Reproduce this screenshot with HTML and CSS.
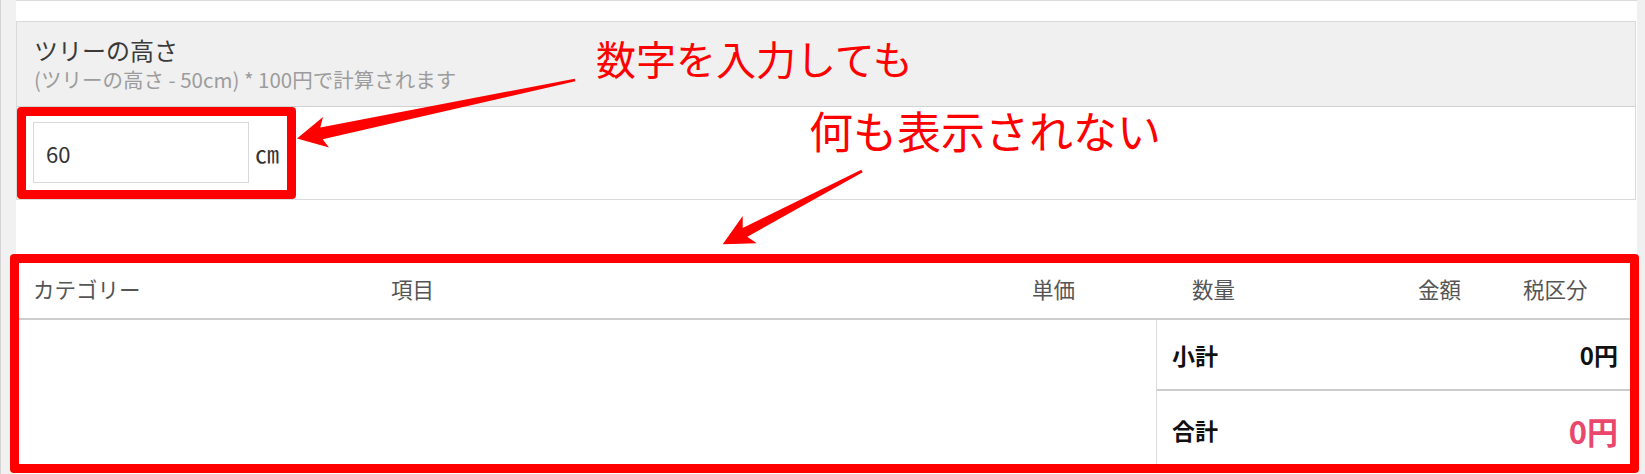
FILE: index.html
```html
<!DOCTYPE html>
<html lang="ja">
<head>
<meta charset="utf-8">
<title>ツリーの高さ</title>
<link rel="stylesheet" href="styles.css">
</head>
<body>
<div class="frame">
  <div class="gutter-left"></div>
  <main class="main">
    <section class="panel">
      <div class="panel-head">
        <div class="panel-title">ツリーの高さ</div>
        <div class="panel-desc">(ツリーの高さ - 50cm) * 100円で計算されます</div>
      </div>
      <div class="panel-body">
        <input class="num-input" type="text" value="60">
        <span class="unit">㎝</span>
      </div>
    </section>
    <section class="table">
      <div class="thead">
        <div class="th">カテゴリー</div>
        <div class="th">項目</div>
        <div class="th">単価</div>
        <div class="th">数量</div>
        <div class="th">金額</div>
        <div class="th">税区分</div>
      </div>
      <div class="tbody">
        <div class="items"></div>
        <div class="summary">
          <div class="sum-row sub"><span class="sum-label">小計</span><span class="sum-value">0円</span></div>
          <div class="sum-row total"><span class="sum-label">合計</span><span class="sum-value">0円</span></div>
        </div>
      </div>
    </section>
  </main>
  <div class="gutter-right"></div>
</div>
<div class="mark mark-input"></div>
<div class="mark mark-table"></div>
<div class="note note-1">数字を入力しても</div>
<div class="note note-2">何も表示されない</div>
<svg class="arrows" width="1645" height="474" viewBox="0 0 1645 474">
  <polygon points="297,138.5 323,117 320.3,127.5 574.7,78.7 575.3,81.3 322.7,139.2 329,147.5" fill="#ff0000"/>
  <polygon points="722.7,244.3 742.7,216 742.7,228 861.3,169.7 862.7,172.3 747.3,236.8 756.7,243.3" fill="#ff0000"/>
</svg>
</body>
</html>
```

FILE: styles.css
```css
* { box-sizing: border-box; }

html, body {
  margin: 0;
  padding: 0;
}

body {
  position: relative;
  width: 1645px;
  height: 474px;
  overflow: hidden;
  background: #f1f1f1;
  font-family: "Noto Sans CJK JP", "Noto Sans", sans-serif;
  color: #333;
}

.frame {
  display: flex;
  height: 474px;
}

.gutter-left {
  width: 16px;
  flex: none;
  border-left: 1px solid #d4d4d4;
  background: #f1f1f1;
}

.main {
  width: 1621px;
  flex: none;
  background: #fff;
  border-top: 1px solid #dcdcdc;
  padding-top: 20px;
}

.gutter-right {
  flex: 1;
  background: #f0f0f0;
}

/* form panel */
.panel {
  width: 1620px;
  border: 1px solid #dadada;
}

.panel-head {
  height: 85px;
  background: #f0f0f0;
  border-bottom: 1px solid #d2d2d2;
  padding: 14px 17px 0;
}

.panel-title {
  font-size: 24px;
  line-height: 28px;
  color: #3a3a3a;
}

.panel-desc {
  margin-top: 3px;
  font-size: 20.5px;
  line-height: 24px;
  color: #9c9c9c;
  white-space: nowrap;
}

.panel-body {
  display: flex;
  align-items: center;
  padding: 15px 16px 16px;
}

.num-input {
  width: 216px;
  height: 61px;
  border: 1px solid #d9d9d9;
  padding: 0 12px;
  font-family: "Noto Sans CJK JP", "Noto Sans", sans-serif;
  font-size: 22px;
  color: #333;
  background: #fff;
  outline: none;
}

.unit {
  margin-left: 6px;
  font-size: 24px;
  color: #333;
}

/* table */
.table {
  width: 1620px;
  margin-top: 58px;
  border: 1px solid #dddddd;
  background: #fff;
}

.thead {
  display: grid;
  grid-template-columns: 358px 641px 160px 226px 105px 1fr;
  height: 61px;
  border-bottom: 2px solid #cdcdcd;
}

.th {
  display: flex;
  align-items: center;
  padding-left: 16px;
  font-size: 21.5px;
  color: #555;
}

.tbody {
  display: flex;
  height: 149px;
}

.items {
  flex: 1;
}

.summary {
  width: 479px;
  border-left: 1px solid #dcdcdc;
  display: flex;
  flex-direction: column;
}

.sum-row {
  display: flex;
  align-items: center;
  justify-content: space-between;
  padding: 0 17px 0 15px;
  font-weight: bold;
}

.sum-row.sub {
  height: 71px;
  border-bottom: 2px solid #cccccc;
}

.sum-row.total {
  flex: 1;
}

.sum-label {
  font-size: 23px;
  color: #111;
}

.sub .sum-value {
  font-size: 24px;
  color: #111;
}

.total .sum-value {
  font-size: 31px;
  color: #e9476b;
}

/* annotations drawn over the page */
.mark {
  position: absolute;
  border: 9px solid #ff0000;
  border-radius: 4px;
}

.mark-input {
  left: 17px;
  top: 107px;
  width: 279px;
  height: 92px;
}

.mark-table {
  left: 10px;
  top: 254px;
  width: 1629px;
  height: 219px;
}

.note {
  position: absolute;
  color: #ff0000;
  line-height: 1;
  white-space: nowrap;
}

.note-1 {
  left: 596px;
  top: 38px;
  font-size: 40px;
}

.note-2 {
  left: 809px;
  top: 108px;
  font-size: 44px;
}

.arrows {
  position: absolute;
  left: 0;
  top: 0;
  pointer-events: none;
}
```
